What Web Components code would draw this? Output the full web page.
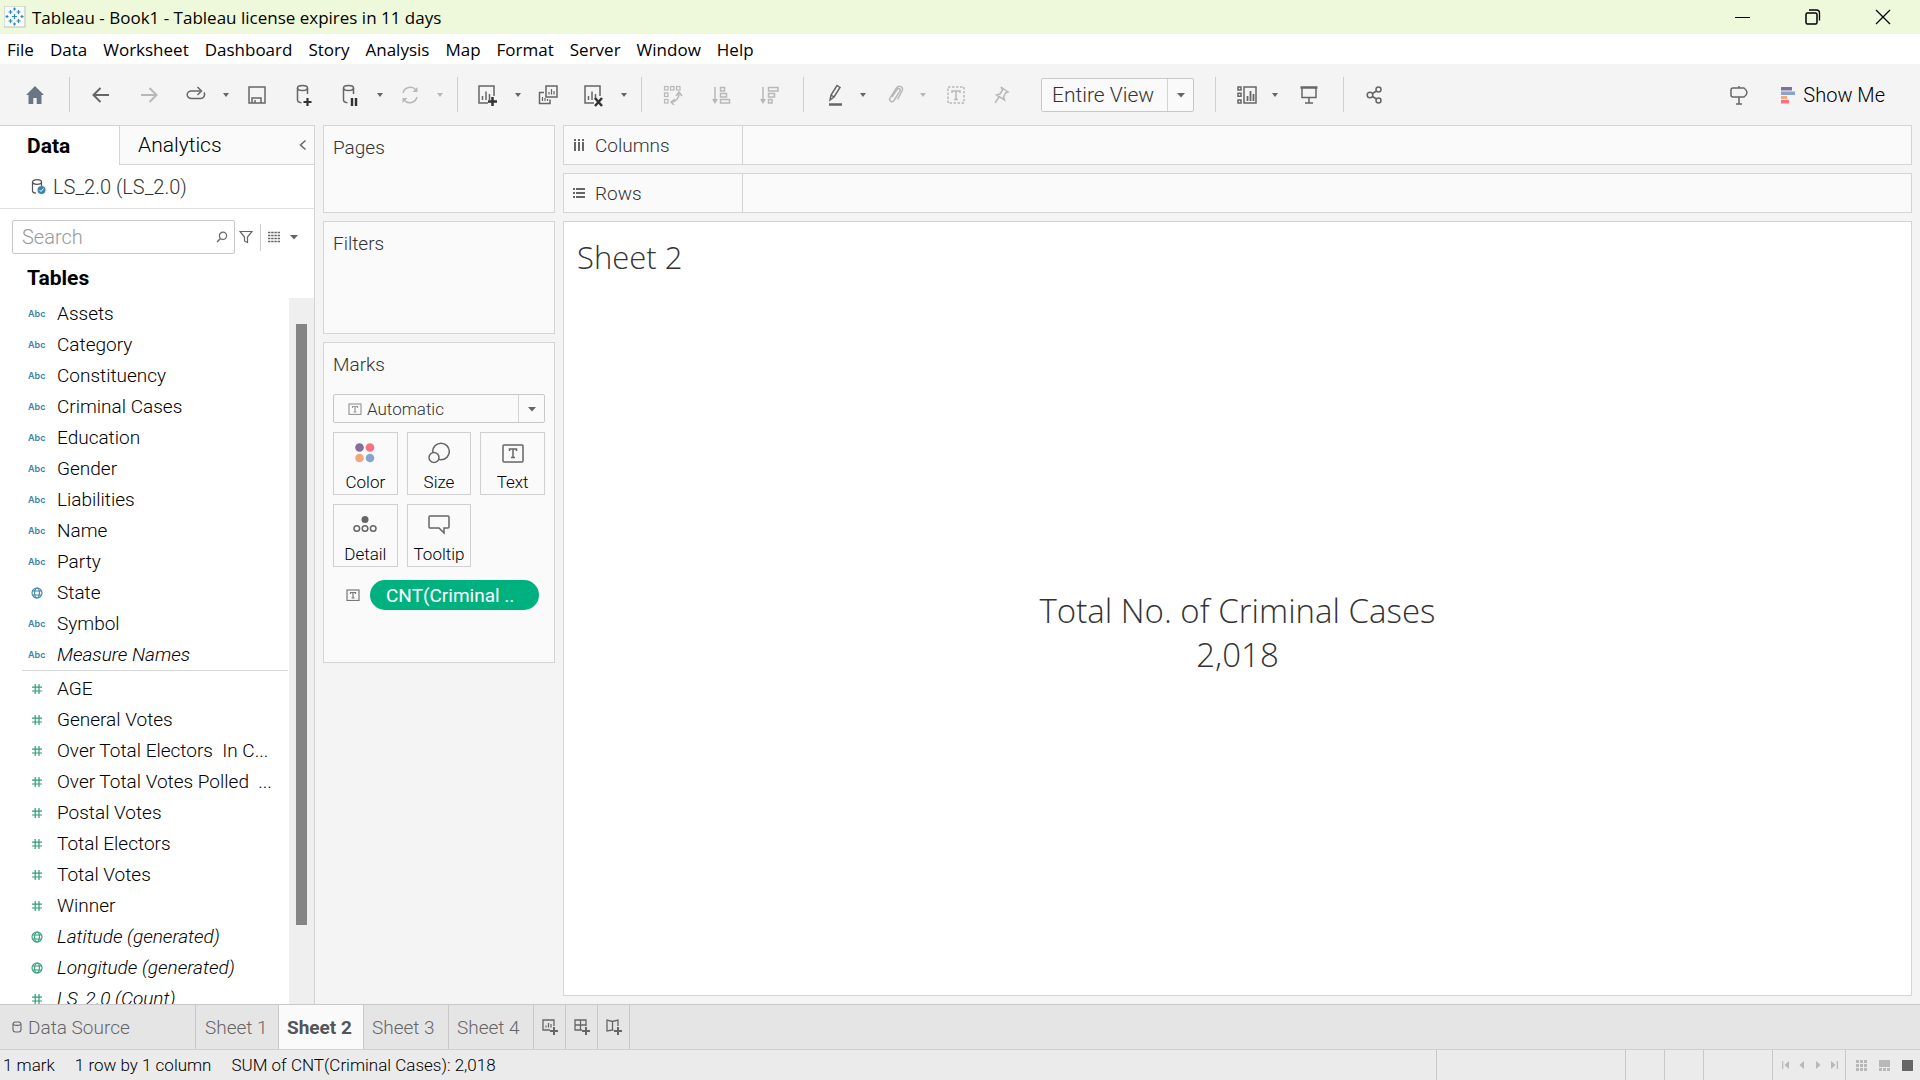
<!DOCTYPE html>
<html lang="en">
<head>
<meta charset="utf-8">
<title>Tableau - Book1</title>
<style>
html, body { height: 100%; }
body { margin: 0; font-family: Roboto, "Liberation Sans", sans-serif; font-weight: 300; font-size: 19px; color: #000; }
</style>
</head>
<body>
<workbook-app></workbook-app>
<script>
const svg = (w, h, body, extra = '') =>
  `<svg width="${w}" height="${h}" viewBox="0 0 ${w} ${h}" fill="none" stroke="currentColor" stroke-width="1.5" aria-hidden="true" ${extra}>${body}</svg>`;

const sheetBars = '<path d="M6.500 17v-4M10 17V8.500M13.500 17v-6"/>';
const cyl = '<ellipse cx="10.500" cy="5" rx="5" ry="2.500"/><path d="M5.500 5v12c0 1.500 1.500 2.500 4 2.800M15.500 5v6"/>';
const plusBold = '<path d="M12 18.500h9M16.500 14v9" stroke="#333" stroke-width="2.500"/>';
const ICONS = {
  home: svg(20, 22, '<path d="M10 2 1 11h2.500v9h4.800v-6h3.400v6h4.800v-9H19z" fill="#6a7684" stroke="none"/>'),
  back: svg(20, 20, '<path d="M18 10H3M9.500 3 2.500 10l7 7" stroke-width="2"/>'),
  forward: svg(20, 20, '<path d="M2 10h15M10.500 3l7 7-7 7" stroke-width="2"/>'),
  redo: svg(20, 20, '<path d="M14 6H5.500a4 3.500 0 0 0 0 7.500h9a4 4 0 0 0 3.500-6"/><path d="M11.500 2l4 4-4 4" />'),
  save: svg(20, 20, '<path d="M2 2h16v16H2zM5 18v-5h9v5M8 18v-3"/>'),
  dbplus: svg(24, 24, cyl + '<path d="M11.500 19h8M15.500 15v8" stroke="#333" stroke-width="2.200"/>'),
  dbpause: svg(24, 24, cyl + '<path d="M14 15v8M18 15v8" stroke="#333" stroke-width="2.400"/>'),
  refresh: svg(20, 20, '<path d="M3 8a7.500 7.500 0 0 1 13-3M17 12a7.500 7.500 0 0 1-13 3"/><path d="M17.500 2v5h-5zM2.500 18v-5h5z" fill="currentColor" stroke="none"/>'),
  newsheet: svg(24, 24, '<path d="M12 20H3V3h15v10"/>' + sheetBars + plusBold),
  dup: svg(22, 22, '<path d="M7 8.500H2.500v11H13v-4"/><rect x="9" y="2" width="11" height="11"/><path d="M12 10.500v-2.500M14.500 10.500V5M17 10.500V7M5.500 17v-4M8 17v-3M10.500 17v-2" stroke-width="1.200"/>'),
  clear: svg(24, 24, '<path d="M12 20H3V3h15v10"/>' + sheetBars + '<path d="M13 15l7 8M20 15l-7 8" stroke="#333" stroke-width="2.500"/>'),
  swap: svg(20, 20, '<g stroke-width="1.200"><rect x="1.500" y="1.500" width="3.500" height="3.500"/><rect x="7.500" y="1.500" width="3.500" height="3.500"/><rect x="13.500" y="1.500" width="3.500" height="3.500"/><rect x="1.500" y="8" width="3.500" height="3.500"/><rect x="1.500" y="14.500" width="3.500" height="3.500"/></g><path d="M16 9c0 4-3 7.500-7 8M12 14l-4 3 3 3M13 11l3-4 3 4"/>'),
  asc: svg(20, 20, '<path d="M4 2v14"/><path d="M1 14h6l-3 5z" fill="currentColor" stroke="none"/><path d="M9.500 2.500h4v3.500h-4zM9.500 8.500h6V12h-6zM9.500 14.500h9V18h-9z"/>'),
  desc: svg(20, 20, '<path d="M4 2v14"/><path d="M1 14h6l-3 5z" fill="currentColor" stroke="none"/><path d="M9.500 2.500h9.500V6H9.500zM9.500 8.500h6V12h-6zM9.500 14.500h3.500V18H9.500z"/>'),
  pen: svg(20, 22, '<path d="M5 16l1-5 6-9.500 3 2-6 9.500zM6 11l3 2"/><path d="M4 20.500h13" stroke-width="2.500"/>'),
  clip: svg(20, 20, '<path d="M6 12l5-7.500c1.500-2 4-.5 3 1.500l-6 9.500c-2 2.500-5.500.5-4-2.500L10.500 3C13-.5 18 2 16 6l-4.500 8.500"/>', 'stroke-width="1.200"'),
  tbox: svg(20, 20, '<rect x="2" y="2" width="16" height="16" stroke-dasharray="2.500 1.500"/><path d="M6 8V6h8v2M10 6v8.500M8 14.500h4"/>'),
  pin: svg(20, 20, '<path d="M9 2l7 5-2.500 1-2 4 1 3-8-5 3.500-1 2.500-4zM7 12l-4 6"/>'),
  showhide: svg(22, 20, '<path d="M8 2h12v16H8zM2 2h3v3H2zM2 8.300h3v3H2zM2 15h3v3H2z"/><path d="M11.500 16v-5M14.500 16V6M17.500 16V9" stroke-width="1.800"/>'),
  present: svg(20, 20, '<path d="M1.500 2.500h17" stroke-width="2.500"/><path d="M3 3v9.500h14V3M10 12.500V18M6 18h8"/>'),
  share: svg(20, 20, '<circle cx="5" cy="10" r="2.800"/><circle cx="13.500" cy="4.500" r="2.500"/><circle cx="13.500" cy="15.500" r="2.500"/><path d="M7.500 8.500l4-2.500M7.500 11.500l4 2.500"/>'),
  guide: svg(20, 22, '<path d="M10 2v2M10 13v7M7 20h6M4 4h11q6 4.500 0 9H4q-2 0-2-2V6q0-2 2-2z"/>'),
  showme: svg(14, 18, '<g stroke="none"><path d="M0 1h11v3.500H0z" fill="#866e9a"/><path d="M0 5.500h14V9H0z" fill="#85a5cf"/><path d="M0 10h6v3H0z" fill="#f6a77c"/><path d="M0 14h8v3.500H0z" fill="#f8707f"/></g>'),
  caret: svg(8, 6, '<path d="M1 1h6L4 5z" fill="currentColor" stroke="none"/>'),
  bigcaret: svg(8, 6, '<path d="M0 1h8L4 5.500z" fill="currentColor" stroke="none"/>'),
  chevron: svg(8, 12, '<path d="M6.500 1.500 1.500 6l5 4.500"/>'),
  dbcheck: svg(16, 18, '<ellipse cx="6" cy="4" rx="4.500" ry="2.300" stroke-width="1.200"/><path d="M1.500 4v9c0 1.200 1.200 2 3.500 2.200M10.500 4v4.500" stroke-width="1.200"/><circle cx="10.500" cy="12" r="4" fill="#3c84a8" stroke="none"/><path d="M8.500 12l1.500 1.500 2.500-3" stroke="#fff" stroke-width="1"/>'),
  search: svg(12, 12, '<circle cx="7" cy="4.800" r="3.600" stroke-width="1.200"/><path d="M4.500 7.500 1 11" />'),
  funnel: svg(14, 14, '<path d="M1 1.500h12L8.500 7v5.500l-3-1.500V7z" stroke-width="1.200"/>'),
  grid: svg(14, 12, '<path d="M1 1.500h12M1 4.500h12M1 7.500h12M1 10.500h12" stroke-width="1.300" stroke-dasharray="2.400 .8"/>'),
  hash: svg(12, 12, '<path d="M1 4.200h10M1 8h10M4.200 1v10M8 1v10" stroke-width="1.200"/>'),
  globe: svg(12, 12, '<g stroke-width="1.100"><circle cx="6" cy="6" r="5"/><ellipse cx="6" cy="6" rx="2.400" ry="5"/><path d="M1.300 4h9.400M1.300 8h9.400"/></g>'),
  cols: svg(12, 14, '<path d="M2 4v9M6 4v9M10 4v9M2 1v2M6 1v2M10 1v2" stroke-width="2"/>'),
  rows: svg(12, 12, '<path d="M3 2h9M3 6h9M3 10h9M0 2h2M0 6h2M0 10h2" stroke-width="2"/>'),
  color: svg(22, 22, '<g stroke="none"><circle cx="5.500" cy="5.500" r="4.300" fill="#866e9a"/><circle cx="16" cy="5.500" r="4.300" fill="#f8707f"/><circle cx="5.500" cy="16" r="4.300" fill="#f2a67e"/><circle cx="16" cy="16" r="4.300" fill="#85a5cf"/></g>'),
  size: svg(22, 22, '<circle cx="13" cy="9.500" r="8.300"/><circle cx="6" cy="15.500" r="5" fill="#fafafa"/>'),
  text: svg(22, 22, '<rect x="1" y="3" width="20" height="17" rx="1"/><path d="M7.500 9V7h7v2M11 7v8.500M9 15.500h4"/>'),
  detail: svg(24, 22, '<circle cx="12" cy="5.500" r="3.500" fill="currentColor" stroke="none"/><circle cx="3.800" cy="14.500" r="2.800"/><circle cx="12" cy="14.500" r="2.800"/><circle cx="20.200" cy="14.500" r="2.800"/>'),
  tooltip: svg(22, 22, '<path d="M2 2h18q1 0 1 1v10q0 1-1 1h-4v5l-5-5H2q-1 0-1-1V3q0-1 1-1z"/>'),
  smallt: svg(14, 12, '<rect x="1" y="1" width="12" height="10.500" stroke-width="1.200"/><path d="M4.500 5V3.500h5V5M7 3.500V9M5.500 9h3" stroke-width="1.200"/>'),
  db: svg(10, 12, '<rect x="1" y="1" width="8" height="10" rx="2.500" stroke-width="1.100"/><path d="M1 3.500q4 1.800 8 0" stroke-width="1.100"/>'),
  tsheet: svg(18, 18, '<path d="M9 12H2V2h11v6" stroke-width="1.300"/><path d="M5 9.500V7.500M7.500 9.500V5M10 9.500V6" stroke-width="1.200"/><path d="M9 13h8M13 9v8" stroke-width="2"/>'),
  tdash: svg(18, 18, '<path d="M9 12H2V2h11v6M2 7h11M7.500 2v10" stroke-width="1.300"/><path d="M9 13h8M13 9v8" stroke-width="2"/>'),
  tstory: svg(18, 18, '<path d="M8.500 12H7.500L2 13V2l5.500 1.500L13 2v6M7.500 3.500v8.500" stroke-width="1.300"/><path d="M9 13h8M13 9v8" stroke-width="2"/>'),
  first: svg(8, 8, '<path d="M.7 0v8" stroke-width="1.200"/><path d="M7 0v8L2.500 4z" fill="currentColor" stroke="none"/>'),
  prev: svg(8, 8, '<path d="M6 0v8L1.500 4z" fill="currentColor" stroke="none"/>'),
  next: svg(8, 8, '<path d="M2 0v8l4.500-4z" fill="currentColor" stroke="none"/>'),
  last: svg(8, 8, '<path d="M7.300 0v8" stroke-width="1.200"/><path d="M1 0v8l4.500-4z" fill="currentColor" stroke="none"/>'),
  tiles: svg(11, 11, '<path d="M0 1.500h11M0 5.500h11M0 9.500h11" stroke-width="3" stroke-dasharray="3 1"/>'),
  film: svg(11, 11, '<path d="M0 0h11v7H0z" fill="currentColor" stroke="none"/><path d="M0 9.500h11" stroke-width="3" stroke-dasharray="3 1"/>'),
  single: svg(11, 11, '<path d="M0 0h11v11H0z" fill="currentColor" stroke="none"/>'),
  logo: svg(22, 22, '<rect width="21" height="21" fill="#f8fbfb" stroke="#b9c2b4" stroke-width="1"/><g stroke="#2f87b8" stroke-width="1.200"><path d="M8 10.500h5M10.500 8v5M4.500 6h4M6.500 4v4M12.500 6h4M14.500 4v4M4.500 15h4M6.500 13v4M12.500 15h4M14.500 13v4M9 3h3M10.500 1.500v3M9 18h3M10.500 16.500v3M1.500 10.500h3M3 9v3M16.500 10.500h3M18 9v3"/></g>'),
  min: svg(16, 16, '<path d="M0 8.500h15" stroke-width="1"/>'),
  restore: svg(16, 16, '<rect x="1" y="4" width="11" height="11" rx="1.500"/><path d="M4 1h7.500q3 0 3 3v7.500" stroke-width="1.300"/>'),
  close: svg(16, 16, '<path d="M1 1l14 14M15 1 1 15" stroke-width="1.300"/>'),
};

const RESET = `
  *, *::before, *::after { box-sizing: border-box; }
  button { font: inherit; color: inherit; background: none; border: 0; padding: 0; margin: 0; border-radius: 0; text-align: left; }
  svg { display: block; flex: none; }
`;
class Base extends HTMLElement {
  connectedCallback() {
    if (this.shadowRoot) return;
    this.attachShadow({ mode: 'open' }).innerHTML = `<style>${RESET}${this.css()}</style>${this.html()}`;
  }
  css() { return ''; }
  html() { return ''; }
}
const define = (name, css, html) => customElements.define(name, class extends Base {
  css() { return css; }
  html() { return typeof html === 'function' ? html(this) : html; }
});

define('workbook-app', `
  :host { display: flex; flex-direction: column; height: 100vh; min-height: 600px; background: #f4f4f4; overflow: hidden; }
  main { flex: 1; min-height: 0; display: flex; gap: 8px; padding-right: 8px; }
  .cards { width: 232px; display: flex; flex-direction: column; gap: 8px; }
  .view { flex: 1; min-width: 0; display: flex; flex-direction: column; gap: 8px; padding-bottom: 8px; }
`, `
  <title-bar></title-bar><menu-bar></menu-bar><tool-bar></tool-bar>
  <main>
    <data-pane></data-pane>
    <div class="cards">
      <shelf-card heading="Pages" style="height:88px"></shelf-card>
      <shelf-card heading="Filters" style="height:113px"></shelf-card>
      <shelf-card heading="Marks" style="height:321px"><marks-card></marks-card></shelf-card>
    </div>
    <div class="view">
      <drop-shelf icon="cols">Columns</drop-shelf>
      <drop-shelf icon="rows">Rows</drop-shelf>
      <sheet-view></sheet-view>
    </div>
  </main>
  <sheet-tabs></sheet-tabs><status-bar></status-bar>
`);

define('title-bar', `
  :host { display: flex; align-items: center; height: 34px; background: #eef8da; padding: 0 2px 0 4px; font: 400 17px/24px "Open Sans", sans-serif; }
  span { flex: 1; padding: 1px 0 0 6px; }
  .win { display: flex; }
  button { width: 70px; height: 34px; display: grid; place-items: center; }
`, `${ICONS.logo}<span>Tableau - Book1 - Tableau license expires in 11 days</span>
  <div class="win"><button aria-label="Minimize">${ICONS.min}</button><button aria-label="Restore">${ICONS.restore}</button><button aria-label="Close">${ICONS.close}</button></div>`);

define('menu-bar', `
  :host { display: block; background: #fff; font: 400 17px/32px "Open Sans", sans-serif; }
  nav { display: flex; gap: 16px; height: 30px; padding-left: 7px; }
`, `<nav>${['File','Data','Worksheet','Dashboard','Story','Analysis','Map','Format','Server','Window','Help'].map(t => `<button>${t}</button>`).join('')}</nav>`);

define('tool-button', `
  :host { display: block; width: 46px; color: #666; }
  :host([wide]) { width: 48px; }
  :host([caret]) { width: 14px; }
  :host([off]) { color: #b8b8b8; }
  button { width: 100%; height: 36px; display: grid; place-items: center; }
  :host([near]) button { justify-items: start; }
`, el => `<button aria-label="${el.getAttribute('icon')}">${ICONS[el.getAttribute('icon')]}</button>`);

define('tool-bar', `
  :host { display: flex; align-items: center; height: 61px; padding-left: 11px; }
  i { width: 1px; height: 35px; background: #cfcfcf; margin: 0 7px 0 10px; }
  .fit { margin: 0 11px 0 16px; width: 153px; }
  .grow { flex: 1; }
  .me { display: flex; align-items: center; gap: 8px; font-size: 20px; line-height: 24px; margin: 0 35px 0 18px; }
`, () => {
  const b = (n, a = '') => `<tool-button icon="${n}" ${a}></tool-button>`;
  const c = (a = '') => b('caret', 'caret ' + a);
  return b('home','wide') + '<i></i>' + b('back','wide') + b('forward','wide off') + b('redo') + c() + b('save','wide') + b('dbplus') + b('dbpause') + c() + b('refresh','off') + c('off')
    + '<i></i>' + b('newsheet') + c() + b('dup') + b('clear') + c() + '<i></i>' + b('swap','wide off') + b('asc','wide off') + b('desc','wide off')
    + '<i></i>' + b('pen', 'wide') + c('near') + b('clip','off') + c('near off') + b('tbox','off') + b('pin','off')
    + '<pick-list class="fit" label="Fit" value="Entire View" large></pick-list><i></i>' + b('showhide', 'wide') + c('near') + b('present','wide') + '<i></i>' + b('share','wide')
    + '<span class="grow"></span>' + b('guide','wide') + `<button class="me">${ICONS.showme}<span>Show Me</span></button>`;
});

define('pick-list', `
  :host { display: block; }
  label { display: flex; align-items: center; height: 29px; border: 1px solid #c8c8c8; border-radius: 2px; background: #fafafa; color: #666; }
  :host([large]) label { height: 34px; }
  .lead { padding-left: 14px; color: #999; }
  select { appearance: none; flex: 1; min-width: 0; align-self: stretch; border: 0; background: none; padding: 0 0 0 5px; font: inherit; font-size: 17px; color: #333; }
  :host([large]) select { padding-left: 10px; font-size: 21px; }
  .drop { width: 26px; align-self: stretch; border-left: 1px solid #d4d4d4; display: grid; place-items: center; }
`, el => `<label>${el.hasAttribute('large') ? '' : `<span class="lead">${ICONS.smallt}</span>`}<select aria-label="${el.getAttribute('label')}"><option>${el.getAttribute('value')}</option></select><span class="drop">${ICONS.bigcaret}</span></label>`);

define('data-pane', `
  :host { display: flex; flex-direction: column; width: 315px; background: #fff; border: 1px solid #d4d4d4; border-width: 1px 1px 0 0; }
  .tabs { display: flex; height: 39px; font-size: 21px; }
  .tabs button { padding-left: 27px; width: 119px; font-weight: 700; }
  .tabs div { flex: 1; display: flex; align-items: center; background: #fafafa; border: 1px solid #d4d4d4; border-width: 0 0 1px 1px; padding-right: 7px; color: #666; }
  .tabs div button:first-child { flex: 1; padding-left: 18px; font-weight: 300; color: #000; }
  .tabs div button:last-child { width: auto; padding: 0; }
  .source { display: flex; align-items: center; gap: 6px; height: 44px; padding-left: 31px; border-bottom: 1px solid #e0e0e0; color: #555; font-size: 20px; }
  .source span { color: #333; }
  .find { display: flex; align-items: center; height: 34px; margin: 11px 0 0 12px; color: #666; }
  label { display: flex; align-items: center; width: 223px; height: 34px; border: 1px solid #c8c8c8; border-radius: 2px; padding: 0 6px 0 9px; }
  input { flex: 1; min-width: 0; border: 0; outline: 0; padding: 0; font: inherit; font-size: 20px; background: none; }
  input::placeholder { color: #999; }
  .find > button:nth-of-type(1) { margin: 0 7px 0 4px; }
  .find i { width: 1px; height: 27px; background: #ccc; margin-right: 6px; }
  .find > button:nth-of-type(3) { margin-left: 9px; }
  h2 { margin: 0; height: 44px; padding: 8px 0 0 27px; font-size: 21px; line-height: 32px; font-weight: 700; }
  .scroll { flex: 1; min-height: 0; display: flex; overflow: hidden; }
  .list { flex: 1; min-width: 0; }
  hr { margin: 0 1px 2px 22px; border: 0; border-top: 1px solid #d8d8d8; }
  .track { width: 25px; background: #efefef; padding: 26px 7px 79px; }
  .track div { height: 100%; background: #858585; }
`, () => {
  const f = (k, t, a = '') => `<field-item kind="${k}" ${a}>${t}</field-item>`;
  return `<div class="tabs"><button>Data</button><div><button>Analytics</button><button aria-label="Collapse">${ICONS.chevron}</button></div></div>
  <div class="source">${ICONS.dbcheck}<span>LS_2.0 (LS_2.0)</span></div>
  <div class="find"><label><input type="text" placeholder="Search" aria-label="Search">${ICONS.search}</label><button aria-label="Filter">${ICONS.funnel}</button><i></i><button aria-label="View">${ICONS.grid}</button><button aria-label="Options">${ICONS.bigcaret}</button></div>
  <h2>Tables</h2>
  <div class="scroll"><div class="list">`
  + ['Assets','Category','Constituency','Criminal Cases','Education','Gender','Liabilities','Name','Party'].map(t => f('abc', t)).join('')
  + f('globe', 'State', 'dim') + f('abc', 'Symbol') + f('abc', 'Measure Names', 'generated') + '<hr>'
  + ['AGE','General Votes','Over Total Electors  In C...','Over Total Votes Polled  ...','Postal Votes','Total Electors','Total Votes','Winner'].map(t => f('hash', t)).join('')
  + f('globe', 'Latitude (generated)', 'generated') + f('globe', 'Longitude (generated)', 'generated') + f('hash', 'LS_2.0 (Count)', 'generated')
  + `</div><div class="track"><div></div></div></div>`;
});

define('field-item', `
  :host { display: block; color: #2f9e78; }
  :host([kind=abc]), :host([dim]) { color: #3c84a8; }
  :host([generated]) .t { font-style: italic; }
  button { display: flex; align-items: center; width: 100%; height: 31px; font-size: 19px; white-space: pre; }
  .k { width: 57px; padding-left: 31px; flex: none; }
  .k.abc { padding-left: 28px; font: 600 9px/12px Inter, sans-serif; }
  .t { color: #000; }
`, el => { const k = el.getAttribute('kind'); return `<button><span class="k ${k}">${k === 'abc' ? 'Abc' : ICONS[k]}</span><span class="t"><slot></slot></span></button>`; });

define('shelf-card', `
  :host { display: block; background: #fafafa; border: 1px solid #d4d4d4; padding: 6px 9px 0; }
  h3 { margin: 0; font-size: 19px; font-weight: 300; line-height: 32px; color: #333; }
`, el => `<h3>${el.getAttribute('heading')}</h3><slot></slot>`);

define('mark-button', `
  :host { display: block; }
  button { width: 100%; height: 63px; border: 1px solid #d0d0d0; display: flex; flex-direction: column; align-items: center; gap: 8px; padding-top: 9px; font-size: 17px; line-height: 21px; color: #666; }
  span { color: #000; }
`, el => `<button>${ICONS[el.getAttribute('icon')]}<span><slot></slot></span></button>`);

define('marks-card', `
  :host { display: block; padding-top: 13px; }
  .grid { display: grid; grid-template-columns: repeat(3, 1fr); gap: 9px; margin-top: 9px; }
  .pill { display: flex; align-items: center; gap: 10px; padding: 13px 6px 0 13px; color: #777; }
  .pill button { flex: 1; height: 30px; border-radius: 15px; background: #00b180; color: #fff; font-weight: 400; font-size: 19px; padding-left: 16px; }
`, `<pick-list label="Mark type" value="Automatic"></pick-list>
  <div class="grid"><mark-button icon="color">Color</mark-button><mark-button icon="size">Size</mark-button><mark-button icon="text">Text</mark-button><mark-button icon="detail">Detail</mark-button><mark-button icon="tooltip">Tooltip</mark-button></div>
  <div class="pill">${ICONS.smallt}<button>CNT(Criminal ..</button></div>`);

define('drop-shelf', `
  :host { display: flex; height: 40px; background: #fafafa; border: 1px solid #d4d4d4; color: #666; flex: none; }
  div { width: 179px; display: flex; align-items: center; gap: 10px; padding-left: 9px; border-right: 1px solid #d4d4d4; font-size: 19px; }
  span { color: #333; }
`, el => `<div>${ICONS[el.getAttribute('icon')]}<span><slot></slot></span></div>`);

define('sheet-view', `
  :host { flex: 1; min-height: 0; display: flex; flex-direction: column; background: #fff; border: 1px solid #d4d4d4; font-family: "Open Sans", sans-serif; font-weight: 300; color: #333; }
  h1 { margin: 0; padding: 14px 0 0 13px; font-size: 31px; line-height: 42px; font-weight: 300; }
  div { flex: 1; display: flex; flex-direction: column; justify-content: center; text-align: center; font-size: 33px; line-height: 44px; padding-bottom: 8px; }
  p { margin: 0; }
`, `<h1>Sheet 2</h1><div><p>Total No. of Criminal Cases</p><p>2,018</p></div>`);

define('sheet-tabs', `
  :host { display: flex; height: 45px; background: #e5e5e5; border-top: 1px solid #c8c8c8; color: #666; font-size: 19px; }
  button { border-right: 1px solid #c8c8c8; padding-left: 8px; display: flex; align-items: center; width: 85px; white-space: nowrap; }
  .src { width: 196px; gap: 6px; padding-left: 12px; }
  .on { background: #fafafa; font-weight: 700; color: #555; }
  .new { width: 32px; padding: 0; justify-content: center; }
  .first { width: 83px; padding-left: 9px; }
`, `<button class="src">${ICONS.db}Data Source</button><button class="first">Sheet 1</button><button class="on">Sheet 2</button><button>Sheet 3</button><button>Sheet 4</button><button class="new" aria-label="New worksheet">${ICONS.tsheet}</button><button class="new" aria-label="New dashboard">${ICONS.tdash}</button><button class="new" aria-label="New story">${ICONS.tstory}</button>`);

define('status-bar', `
  :host { display: flex; height: 31px; background: #ebebeb; border-top: 1px solid #d0d0d0; font-size: 17px; line-height: 31px; white-space: nowrap; }
  .msg { flex: 1; display: flex; gap: 20px; padding-left: 3px; }
  .cell { border-left: 1px solid #c8c8c8; display: flex; align-items: center; color: #b8b8b8; }
  .nav { width: 73px; gap: 8px; padding-left: 9px; }
  .modes { width: 75px; gap: 12px; padding-left: 10px; }
  .on { color: #666; }
`, `<div class="msg"><span>1 mark</span><span>1 row by 1 column</span><span>SUM of CNT(Criminal Cases): 2,018</span></div>
  <div class="cell" style="width:189px"></div><div class="cell" style="width:39px"></div><div class="cell" style="width:39px"></div><div class="cell" style="width:69px"></div>
  <div class="cell nav"><button aria-label="First">${ICONS.first}</button><button aria-label="Previous">${ICONS.prev}</button><button aria-label="Next">${ICONS.next}</button><button aria-label="Last">${ICONS.last}</button></div>
  <div class="cell modes"><button aria-label="Tiles">${ICONS.tiles}</button><button aria-label="Filmstrip">${ICONS.film}</button><button class="on" aria-label="Tabs">${ICONS.single}</button></div>`);
</script>
</body>
</html>
